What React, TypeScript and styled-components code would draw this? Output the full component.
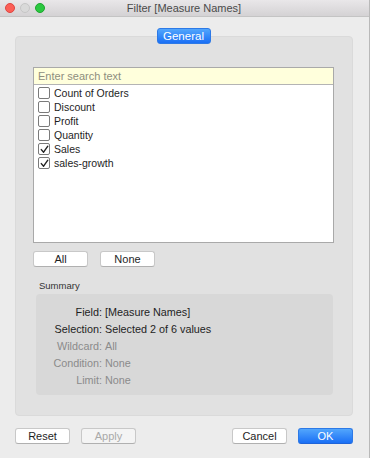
import styled, { createGlobalStyle } from 'styled-components';

const GlobalStyle = createGlobalStyle`
    html, body {
        margin: 0;
        padding: 0;
        background: #ececec;
    }
    body {
        font-family: "Liberation Sans", Arial, sans-serif;
        font-size: 10.5px;
        color: #1e1e1e;
    }
`

const items = [
    { name: 'Count of Orders', checked: false },
    { name: 'Discount', checked: false },
    { name: 'Profit', checked: false },
    { name: 'Quantity', checked: false },
    { name: 'Sales', checked: true },
    { name: 'sales-growth', checked: true },
];

const summary = [
    { label: 'Field:', value: '[Measure Names]', muted: false },
    { label: 'Selection:', value: 'Selected 2 of 6 values', muted: false },
    { label: 'Wildcard:', value: 'All', muted: true },
    { label: 'Condition:', value: 'None', muted: true },
    { label: 'Limit:', value: 'None', muted: true },
];

const App = () => {
    return (
        <>
            <GlobalStyle/>
            <Window>
                <TitleBar>
                    <Lights>
                        <Light $color="#fc5f57" $border="#de4641"/>
                        <Light $color="#d9d9d9" $border="#c6c6c6"/>
                        <Light $color="#2bc840" $border="#1ea52e"/>
                    </Lights>
                    <Title>Filter [Measure Names]</Title>
                </TitleBar>
                <Content>
                    <TabRow>
                        <TabButton>General</TabButton>
                    </TabRow>
                    <Panel>
                        <ListBox>
                            <Search placeholder="Enter search text"/>
                            <List>
                                {items.map(item => (
                                    <Row key={item.name}>
                                        <Check>
                                            {item.checked && (
                                                <svg width="9" height="9" viewBox="0 0 9 9">
                                                    <path d="M1.3 4.6 L3.6 7.2 L7.8 1.2" fill="none" stroke="#222" strokeWidth="1.4" strokeLinecap="round" strokeLinejoin="round"/>
                                                </svg>
                                            )}
                                        </Check>
                                        <span>{item.name}</span>
                                    </Row>
                                ))}
                            </List>
                        </ListBox>
                        <ButtonRow>
                            <Button>All</Button>
                            <Button>None</Button>
                        </ButtonRow>
                        <SummaryLabel>Summary</SummaryLabel>
                        <SummaryBox>
                            {summary.map(s => (
                                <SummaryRow key={s.label} $muted={s.muted}>
                                    <SumKey>{s.label}</SumKey>
                                    <span>{s.value}</span>
                                </SummaryRow>
                            ))}
                        </SummaryBox>
                    </Panel>
                    <Footer>
                        <FooterGroup>
                            <Button>Reset</Button>
                            <Button $disabled>Apply</Button>
                        </FooterGroup>
                        <FooterGroup>
                            <Button>Cancel</Button>
                            <Button $primary>OK</Button>
                        </FooterGroup>
                    </Footer>
                </Content>
            </Window>
        </>
    );
};

export default App;

const Window = styled.div`
    width: 370px;
    height: 458px;
    box-sizing: border-box;
    background: #ececec;
    border-right: 1px solid #b9b9b9;
    display: flex;
    flex-direction: column;
    overflow: hidden;
`

const TitleBar = styled.div`
    height: 16px;
    flex-shrink: 0;
    background: linear-gradient(#e9e7e9, #d4d2d4);
    border-bottom: 1px solid #c4c4c4;
    display: flex;
    align-items: center;
`

const Lights = styled.div`
    display: flex;
    gap: 5px;
    padding-left: 5px;
`

const Light = styled.div<{ $color: string; $border: string }>`
    width: 10px;
    height: 10px;
    border-radius: 50%;
    box-sizing: border-box;
    background: ${p => p.$color};
    border: 1px solid ${p => p.$border};
`

const Title = styled.div`
    flex: 1;
    text-align: center;
    font-size: 11px;
    color: #4a4a4a;
    margin-left: 10px;
    margin-right: 56px;
`

const Content = styled.div`
    padding: 11px 16px 0 15px;
    display: flex;
    flex-direction: column;
`

const TabRow = styled.div`
    display: flex;
    justify-content: center;
    margin-bottom: -8px;
    position: relative;
    z-index: 1;
`

const TabButton = styled.div`
    width: 54px;
    height: 16px;
    box-sizing: border-box;
    border-radius: 3px;
    background: linear-gradient(#52a6fc, #1a6ff5);
    border: 1px solid #2d79e6;
    color: #fff;
    font-size: 11.5px;
    display: flex;
    align-items: center;
    justify-content: center;
    margin-right: 1px;
`

const Panel = styled.div`
    background: #e1e1e1;
    border-radius: 4px;
    border: 1px solid #dadada;
    padding: 30px 18px 20px 17px;
    display: flex;
    flex-direction: column;
`

const ListBox = styled.div`
    height: 176px;
    box-sizing: border-box;
    background: #fff;
    border: 1px solid #a9a9a9;
    display: flex;
    flex-direction: column;
`

const Search = styled.input`
    height: 17px;
    box-sizing: border-box;
    border: none;
    border-bottom: 1px solid #b4b4b4;
    background: #ffffdc;
    padding: 0 4px;
    font-family: "Liberation Sans", Arial, sans-serif;
    font-size: 11px;
    outline: none;
    &::placeholder {
        color: #8e8e7e;
    }
`

const List = styled.div`
    display: flex;
    flex-direction: column;
    padding-top: 1px;
`

const Row = styled.div`
    height: 14px;
    display: flex;
    align-items: center;
    gap: 4px;
    padding-left: 4px;
`

const Check = styled.div`
    width: 12px;
    height: 12px;
    box-sizing: border-box;
    border: 1px solid #7a7a7a;
    border-radius: 2px;
    background: #fff;
    display: flex;
    align-items: center;
    justify-content: center;
`

const ButtonRow = styled.div`
    display: flex;
    gap: 12px;
    margin-top: 8px;
`

const Button = styled.div<{ $primary?: boolean; $disabled?: boolean }>`
    width: 55px;
    height: 16px;
    box-sizing: border-box;
    border-radius: 3px;
    border: 1px solid ${p => p.$primary ? '#2d79e6' : '#c8c8c8'};
    border-bottom-color: ${p => p.$primary ? '#1f64d8' : '#b0b0b0'};
    background: ${p => p.$primary ? 'linear-gradient(#52a6fc, #1a6ff5)' : p.$disabled ? '#f4f4f4' : '#fff'};
    color: ${p => p.$primary ? '#fff' : p.$disabled ? '#a9a9a9' : '#1e1e1e'};
    font-size: 11px;
    display: flex;
    align-items: center;
    justify-content: center;
`

const SummaryLabel = styled.div`
    font-size: 9.5px;
    color: #333;
    margin: 13px 0 3px 6px;
`

const SummaryBox = styled.div`
    margin-left: 3px;
    margin-right: 1px;
    background: #d8d8d8;
    border-radius: 4px;
    padding: 9px 0 7px;
    display: flex;
    flex-direction: column;
    font-size: 10.8px;
`

const SummaryRow = styled.div<{ $muted: boolean }>`
    height: 17px;
    display: grid;
    grid-template-columns: 66px 1fr;
    column-gap: 3px;
    align-items: center;
    color: ${p => p.$muted ? '#8b8b8b' : '#1e1e1e'};
`

const SumKey = styled.span`
    text-align: right;
`

const Footer = styled.div`
    display: flex;
    justify-content: space-between;
    margin-top: 12px;
`

const FooterGroup = styled.div`
    display: flex;
    gap: 11px;
`
